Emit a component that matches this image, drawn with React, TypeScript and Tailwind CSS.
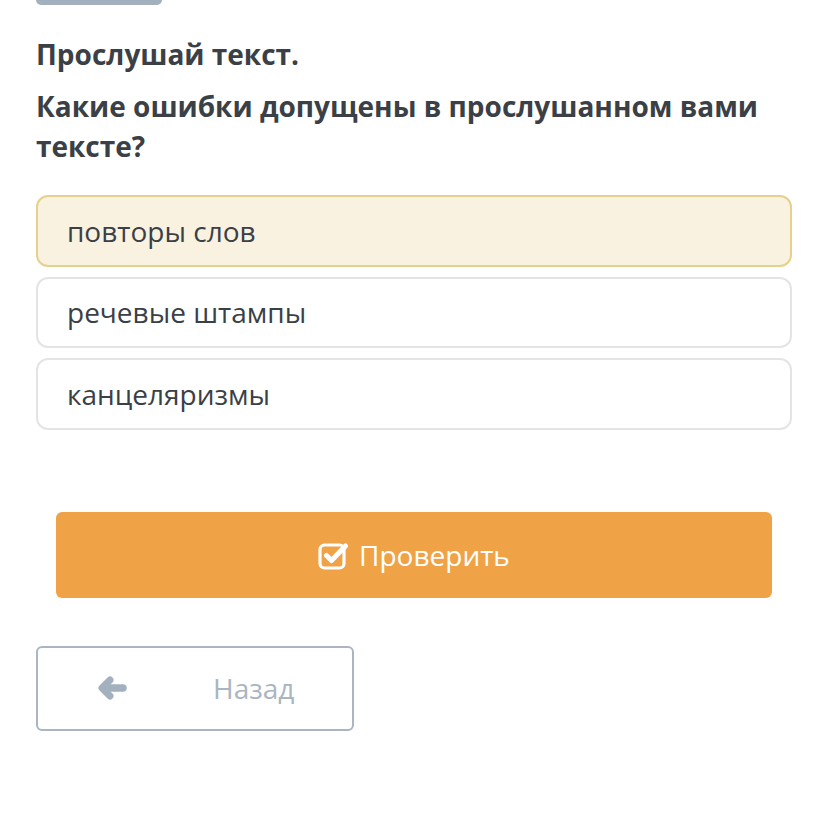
import React from "react";

export default function App() {
  const font = { fontFamily: '"Open Sans", "Noto Sans", sans-serif' };
  return (
    <div className="w-[828px] h-[829px] bg-white overflow-hidden" style={font}>
      <div className="px-[36px]">
        <div className="w-[126px] h-[5px] bg-[#a3b1bf] rounded-b-[5px]" />
        <h1 className="mt-[31px] text-[28px] leading-[36px] font-bold text-[#3b3f46]">Прослушай текст.</h1>
        <h2 className="mt-[14px] text-[28px] leading-[40px] font-bold text-[#3b3f46]">
          Какие ошибки допущены в прослушанном вами тексте?
        </h2>
        <div className="mt-[29px] flex flex-col gap-[10px]">
          <div className="h-[72px] flex items-center pl-[29px] pb-[1px] rounded-[12px] border-2 border-[#e6d08c] bg-[#f9f2e1] text-[28px] text-[#3b3f46]">
            повторы слов
          </div>
          <div className="h-[71px] flex items-center pl-[29px] pb-[1px] rounded-[12px] border-2 border-[#e4e4e4] bg-white text-[28px] text-[#3b3f46]">
            речевые штампы
          </div>
          <div className="h-[72px] flex items-center pl-[29px] pb-[1px] rounded-[12px] border-2 border-[#e4e4e4] bg-white text-[28px] text-[#3b3f46]">
            канцеляризмы
          </div>
        </div>
        <div className="px-[20px] mt-[82px]">
          <div className="h-[86px] rounded-[6px] bg-[#f0a247] flex items-center justify-center gap-[10px] text-white text-[28px]">
            <svg width="31" height="29" viewBox="0 0 31 29" fill="none">
              <rect x="2" y="4" width="24" height="23" rx="4.5" stroke="#fff" strokeWidth="3.2" />
              <path d="M8.5 14.5 L13.5 19.5 L27.5 5" stroke="#fff" strokeWidth="5" strokeLinecap="round" strokeLinejoin="round" />
            </svg>
            <span>Проверить</span>
          </div>
        </div>
        <div className="mt-[48px] w-[318px] h-[85px] rounded-[6px] border-2 border-[#a9b5c1] flex items-center pb-[2px]">
          <svg className="ml-[59px]" width="30" height="26" viewBox="0 0 30 26" fill="none">
            <path d="M13 5 L5 13 L13 21" stroke="#a3b1bf" strokeWidth="7" strokeLinecap="round" strokeLinejoin="round" />
            <path d="M7 13 L26 13" stroke="#a3b1bf" strokeWidth="7.5" strokeLinecap="round" />
          </svg>
          <span className="ml-[86px] text-[28px] text-[#a9b5c1]">Назад</span>
        </div>
      </div>
    </div>
  );
}
